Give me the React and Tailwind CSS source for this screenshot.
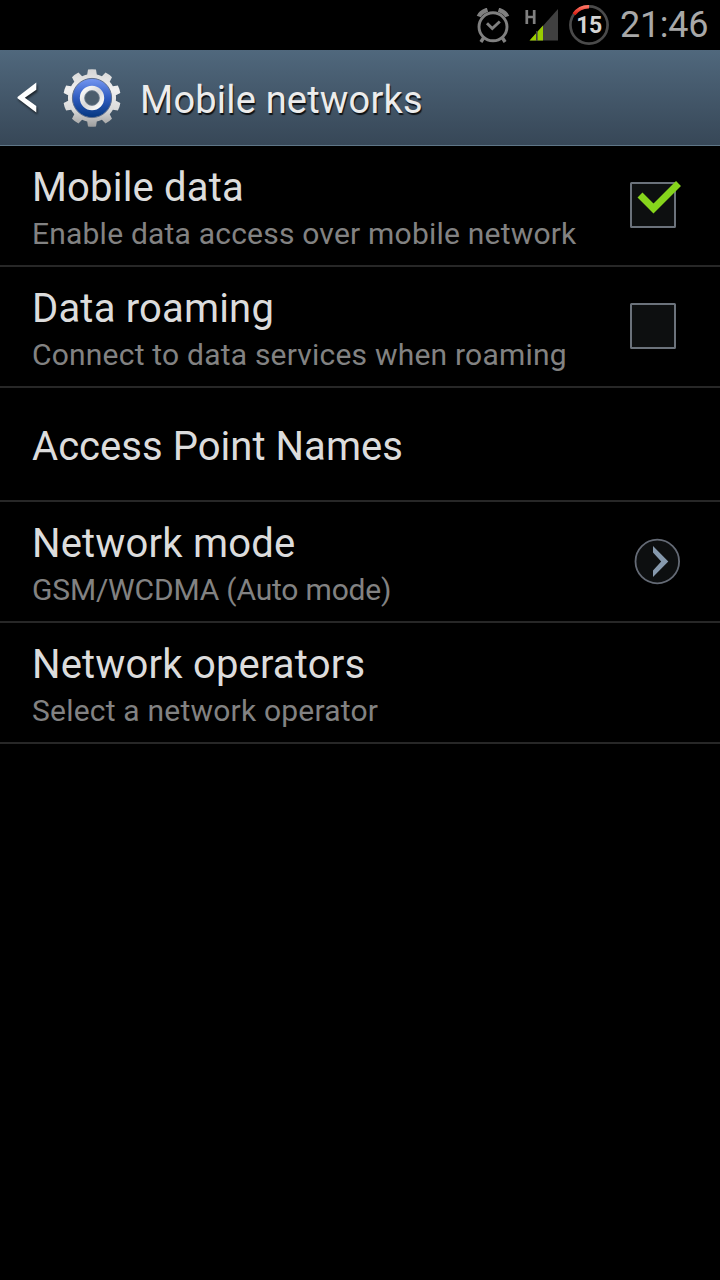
import React, { useState } from 'react';

const SETTINGS = [
  { id: 'data', title: 'Mobile data', summary: 'Enable data access over mobile network', type: 'checkbox' },
  { id: 'roaming', title: 'Data roaming', summary: 'Connect to data services when roaming', type: 'checkbox' },
  { id: 'apn', title: 'Access Point Names' },
  { id: 'mode', title: 'Network mode', summary: 'GSM/WCDMA (Auto mode)', type: 'dialog', tracking: 'tracking-[-0.18px]' },
  { id: 'operators', title: 'Network operators', summary: 'Select a network operator' },
];

const TEETH = [0, 36, 72, 108, 144, 180, 216, 252, 288, 324];

function AlarmIcon() {
  return (
    <svg width="34" height="36" viewBox="476 8 34 36" fill="none" stroke="#808080">
      <circle cx="493" cy="26.800" r="14" strokeWidth="2.900" />
      <path d="M487 23.200l5.300 5.300 7.500-7" strokeWidth="2.900" />
      <path d="M483.500 38l-2.600 4M502.500 38l2.600 4" strokeWidth="3.400" />
      <path d="M478.800 16.600Q480.500 12 487.500 9.800M507.200 16.600Q505.500 12 498.500 9.800" strokeWidth="4.400" />
    </svg>
  );
}

function SignalIcon() {
  return (
    <svg width="34" height="33" viewBox="525 9 34 33">
      <path d="M530 40.500L558 9v31.500z" fill="#404040" />
      <path d="M529.500 40.500L543 25.500v15z" fill="#99cc00" />
      <path d="M536.800 31v10" stroke="#404040" strokeWidth="1.600" />
      <path d="M526.800 10v14M534.200 10v14M526.500 17h8" stroke="#808080" strokeWidth="2.700" fill="none" />
    </svg>
  );
}

function BatteryRing() {
  return (
    <div className="relative flex h-10 w-10 items-center justify-center">
      <svg className="absolute inset-0" width="40" height="40" viewBox="0 0 40 40" fill="none">
        <defs>
          <linearGradient id="charge" x1="0" y1="0" x2="0" y2="1">
            <stop offset="0" stopColor="#ff7060" />
            <stop offset="1" stopColor="#d81e12" />
          </linearGradient>
        </defs>
        <circle cx="20" cy="20" r="18.600" stroke="#4a4a4a" strokeWidth="2.700" />
        <path d="M5 9.200A18.300 18.300 0 0 1 20 1.800" stroke="url(#charge)" strokeWidth="3.600" />
      </svg>
      <span className="text-[23px] leading-none font-bold tracking-[-0.4px] text-[#d4d4d4]">15</span>
    </div>
  );
}

function GearIcon() {
  return (
    <svg width="60" height="60" viewBox="-30 -30 60 60">
      <defs>
        <linearGradient id="metal" x1="0" y1="-29" x2="0" y2="29" gradientUnits="userSpaceOnUse">
          <stop offset="0" stopColor="#d4d4d4" />
          <stop offset="0.35" stopColor="#f0f0f0" />
          <stop offset="0.7" stopColor="#dadada" />
          <stop offset="1" stopColor="#9c9c9c" />
        </linearGradient>
        <linearGradient id="blue" x1="0" y1="0" x2="0" y2="1">
          <stop offset="0" stopColor="#7597f2" />
          <stop offset="0.5" stopColor="#2f5cc0" />
          <stop offset="1" stopColor="#04367e" />
        </linearGradient>
        <linearGradient id="hub" x1="0" y1="0" x2="1" y2="1">
          <stop offset="0" stopColor="#ffffff" />
          <stop offset="0.5" stopColor="#d8d8d8" />
          <stop offset="1" stopColor="#ffffff" />
        </linearGradient>
        <clipPath id="gear">
          <circle r="24" />
          {TEETH.map((angle) => (
            <path key={angle} d="M-5.200-21L-4-28.500Q0-29.200 4-28.500L5.200-21z" transform={`rotate(${angle})`} />
          ))}
        </clipPath>
      </defs>
      <g clipPath="url(#gear)">
        <rect x="-30" y="-30" width="60" height="60" fill="url(#metal)" />
      </g>
      <circle r="19.600" fill="url(#blue)" stroke="#5c6d8c" strokeWidth="1" />
      <circle r="9.800" fill="#4b5d6d" stroke="url(#hub)" strokeWidth="4.800" />
      <circle r="7.400" fill="none" stroke="#6f7f90" strokeWidth="0.800" />
    </svg>
  );
}

function StatusBar() {
  return (
    <div className="flex h-[50px] items-start justify-end pr-[12px]">
      <div className="mt-2"><AlarmIcon /></div>
      <div className="mt-[9px] ml-[15px]"><SignalIcon /></div>
      <div className="mt-[5px] ml-[10px]"><BatteryRing /></div>
      <span className="mt-1 ml-[11px] w-[88px] text-[36px] leading-[42px] tracking-[-0.3px] whitespace-nowrap text-[#a8a8a8]">21:46</span>
    </div>
  );
}

function Header() {
  return (
    <header className="flex h-24 items-center border-b border-[#5f7687] bg-linear-to-b from-[#50687d] to-[#374757] pl-4">
      <svg width="24" height="36" viewBox="16 80 24 36" className="drop-shadow-[1px_2px_1px_rgba(0,0,0,0.6)]">
        <path d="M36.300 82.500v7.200L24.800 97.700 36.300 106v6.500L17.500 98.300v-1.200z" fill="#fff" />
      </svg>
      <div className="ml-[22px]"><GearIcon /></div>
      <h1 className="mt-1 ml-[18px] text-[38px] leading-[44px] tracking-[0.2px] text-[#ececec] [text-shadow:1px_2px_1px_rgba(0,0,0,0.8)]">
        Mobile networks
      </h1>
    </header>
  );
}

function Checkbox({ checked }) {
  return (
    <svg width="54" height="50" viewBox="628 180 54 50">
      <rect x="631" y="183" width="44" height="44" rx="0.500" fill="#0d0f10" stroke="#6b727b" strokeWidth="2" />
      {checked && <path d="M640 195l13.500 13.500 25-25" fill="none" stroke="#86d41c" strokeWidth="7" />}
    </svg>
  );
}

function DialogArrow() {
  return (
    <svg width="48" height="48" viewBox="633 537 48 48">
      <circle cx="657.300" cy="561.500" r="21.800" fill="#0d0f10" stroke="#646a75" strokeWidth="1.800" />
      <path d="M653 546l15.300 15.500L653 577v-6.500l8.200-9L653 552.500z" fill="#8699ad" />
    </svg>
  );
}

function SettingRow({ item, checked, onToggle }) {
  if (!item.summary) {
    return (
      <div className="flex h-[114px] items-center border-b-2 border-[#272727] px-8 pt-1">
        <div className="text-[40px] leading-[47px] tracking-[0.04px] text-[#dcdcdc]">{item.title}</div>
      </div>
    );
  }
  return (
    <div className="flex h-[121px] items-center justify-between border-b-2 border-[#272727] pl-8" onClick={onToggle}>
      <div className="pt-1 whitespace-nowrap">
        <div className="text-[40px] leading-[47px] tracking-[0.18px] text-[#dcdcdc]">{item.title}</div>
        <div className={`mt-[5px] text-[30px] leading-[35px] text-[#828282] ${item.tracking || 'tracking-[0.21px]'}`}>{item.summary}</div>
      </div>
      {item.type === 'checkbox' && <div className="mr-[38px] pb-0.5"><Checkbox checked={checked} /></div>}
      {item.type === 'dialog' && <div className="mr-[39px] pb-0.5"><DialogArrow /></div>}
    </div>
  );
}

function App() {
  const [enabled, setEnabled] = useState({ data: true, roaming: false });

  const toggle = (item) => {
    if (item.type !== 'checkbox') return;
    setEnabled(prev => ({ ...prev, [item.id]: !prev[item.id] }));
  };

  return (
    <div className="min-h-screen w-[720px] overflow-hidden bg-black font-[Roboto,sans-serif]">
      <StatusBar />
      <Header />
      <main>
        {SETTINGS.map((item) => (
          <SettingRow key={item.id} item={item} checked={enabled[item.id]} onToggle={() => toggle(item)} />
        ))}
      </main>
    </div>
  );
}

export default App;
